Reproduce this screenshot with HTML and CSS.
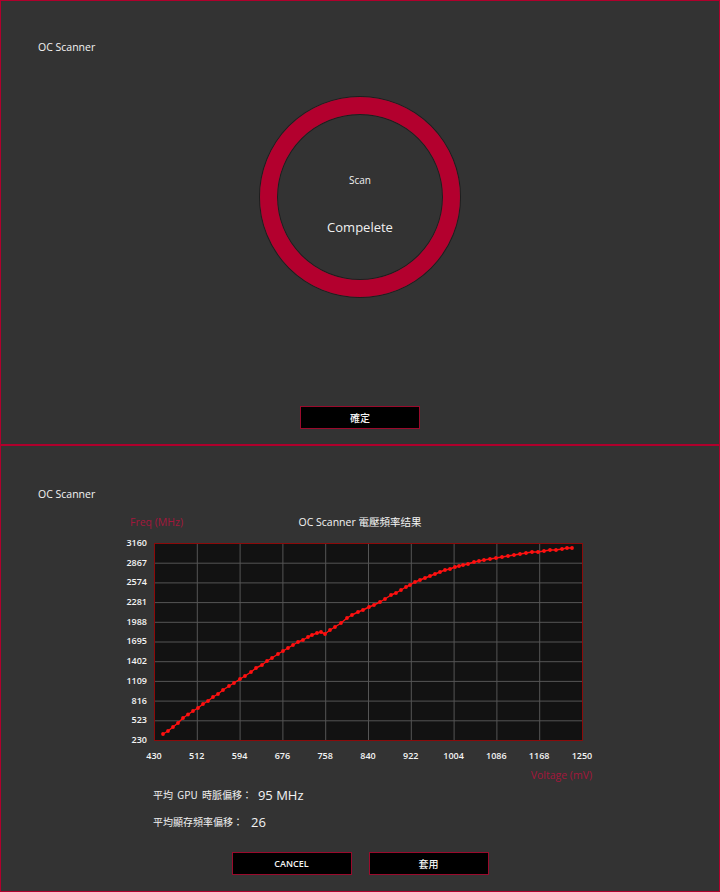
FILE: index.html
```html
<!DOCTYPE html>
<html>
<head>
<meta charset="utf-8">
<link rel="stylesheet" href="styles.css">
</head>
<body>
<section class="panel panel-top">
  <div class="title">OC Scanner</div>
  <div class="ring">
    <div class="ring-label">Scan</div>
    <div class="ring-status">Compelete</div>
  </div>
  <button class="btn btn-ok">確定</button>
</section>
<section class="panel panel-bottom">
  <div class="title">OC Scanner</div>
  <div class="chart-head">
    <span class="axis-name freq">Freq (MHz)</span>
    <span class="chart-title">OC Scanner 電壓頻率结果</span>
    <span></span>
  </div>
  <div class="chart-body">
    <div class="ylabels">
      <span>3160</span><span>2867</span><span>2574</span><span>2281</span><span>1988</span><span>1695</span><span>1402</span><span>1109</span><span>816</span><span>523</span><span>230</span>
    </div>
    <svg class="plot" width="429" height="198" viewBox="0 0 429 198">
      <defs>
        <marker id="dot" viewBox="0 0 5 5" refX="2.5" refY="2.5" markerWidth="5" markerHeight="5" markerUnits="userSpaceOnUse">
          <circle cx="2.5" cy="2.5" r="1.9" fill="#ff1010"/>
        </marker>
      </defs>
      <rect x="0.5" y="0.5" width="428" height="197" fill="#121212"/>
      <path d="M43.3 1V197M86.1 1V197M128.9 1V197M171.7 1V197M214.5 1V197M257.3 1V197M300.1 1V197M342.9 1V197M385.7 1V197M1 20.2H428M1 39.9H428M1 59.6H428M1 79.3H428M1 99H428M1 118.7H428M1 138.4H428M1 158.1H428M1 177.8H428" stroke="#555" stroke-width="1" fill="none"/>
      <rect x="0.5" y="0.5" width="428" height="197" fill="none" stroke="#8c0a0a"/>
      <polyline fill="none" stroke="#ff1010" stroke-width="1.4" stroke-linejoin="round" marker-start="url(#dot)" marker-mid="url(#dot)" marker-end="url(#dot)"
        points="9,191 14,188 19,184 24,180 29,175 34,171.5 39,168 44,165 49,161 54,158 59,154 64,151 69,147 75,143 80,140 86,136 91,133 97,129 102,125 108,122 113,118 118,115 124,111 129,108 134,105 139,102 144,99 149,97 154,94 158,92 163,90 167,89 171,91 176,87 181,84 187,80 193,75 198,72 204,69 209,67 215,64 220,62 226,59 231,56 237,52 242,50 247,47 252,44 256,42 261,39 266,37 271,35 276,33 281,31 286,29 291,27 296,26 301,24 305,23 309,22 314,21 320,19 325,18 330,17 336,16 342,15 348,14 354,13 360,12 366,11 372,10 378,9 384,9 390,8 396,7 402,7 408,6 413,5 418,5"/>
    </svg>
  </div>
  <div class="xlabels">
    <span>430</span><span>512</span><span>594</span><span>676</span><span>758</span><span>840</span><span>922</span><span>1004</span><span>1086</span><span>1168</span><span>1250</span>
  </div>
  <div class="axis-name volt">Voltage (mV)</div>
  <div class="stat stat-gpu">
    <span class="stat-label">平均 GPU 時脈偏移：</span>
    <span class="stat-value">95 MHz</span>
  </div>
  <div class="stat stat-mem">
    <span class="stat-label">平均顯存頻率偏移：</span>
    <span class="stat-value">26</span>
  </div>
  <div class="actions">
    <button class="btn">CANCEL</button>
    <button class="btn btn-cjk">套用</button>
  </div>
</section>
</body>
</html>
```
FILE: styles.css
```css
html, body {
  margin: 0;
  padding: 0;
  background: #333333;
}
body {
  width: 720px;
  height: 892px;
  overflow: hidden;
  font-family: "Open Sans", "Noto Sans CJK TC", sans-serif;
  color: #f0f0f0;
}
.panel {
  box-sizing: border-box;
  width: 720px;
  border: 1px solid #b0002c;
  display: flex;
  flex-direction: column;
}
.panel-top {
  height: 445px;
  padding-top: 39px;
  align-items: center;
}
.panel-bottom {
  height: 447px;
  padding-top: 41px;
}
.title {
  align-self: flex-start;
  padding-left: 37px;
  font-size: 10.5px;
  line-height: 14px;
  color: #f4f4f4;
}
.ring {
  margin-top: 43px;
  width: 166px;
  height: 166px;
  border: 17px solid #b3002e;
  border-radius: 50%;
  box-shadow: 0 0 0 1px #1e1e1e, inset 0 0 0 1px #1e1e1e;
  display: flex;
  flex-direction: column;
  align-items: center;
}
.ring-label {
  margin-top: 59px;
  font-size: 10px;
  line-height: 14px;
}
.ring-status {
  margin-top: 31px;
  font-size: 13px;
  line-height: 18px;
}
.btn {
  box-sizing: border-box;
  width: 120px;
  height: 23px;
  padding: 0;
  background: #000;
  border: 1px solid #9a0a2c;
  color: #f4f4f4;
  font-family: "Open Sans", "Noto Sans CJK TC", sans-serif;
  font-size: 9px;
  font-weight: 600;
}
.btn-ok {
  margin-top: 109px;
  font-size: 10px;
  font-family: "Noto Sans CJK TC", sans-serif;
  font-weight: 500;
}
.btn-cjk {
  font-family: "Noto Sans CJK TC", sans-serif;
  font-size: 10px;
  font-weight: 500;
}
.chart-head {
  margin-top: 14px;
  display: grid;
  grid-template-columns: 1fr auto 1fr;
  font-size: 10.5px;
  line-height: 14px;
}
.axis-name {
  color: #a3173c;
  font-size: 10.5px;
  line-height: 14px;
}
.freq {
  padding-left: 129px;
}
.chart-title {
  color: #f4f4f4;
}
.chart-body {
  margin-top: 4px;
  display: flex;
  padding-left: 118px;
}
.ylabels {
  width: 28px;
  display: flex;
  flex-direction: column;
  align-items: flex-end;
  margin-right: 7px;
}
.ylabels span, .xlabels span {
  font-size: 9px;
  font-weight: 600;
  color: #f4f4f4;
}
.ylabels span {
  height: 19.7px;
  line-height: 19.7px;
}
.plot {
  display: block;
  margin-top: 10px;
}
.xlabels {
  display: flex;
  padding-left: 131.6px;
  line-height: 12px;
}
.xlabels span {
  width: 42.8px;
  text-align: center;
}
.volt {
  margin-top: 6px;
  align-self: flex-end;
  padding-right: 127px;
}
.stat {
  display: flex;
  align-items: center;
  padding-left: 152px;
  height: 18px;
}
.stat-gpu {
  margin-top: 4px;
}
.stat-mem {
  margin-top: 9px;
}
.stat-label {
  font-family: "Noto Sans CJK TC", sans-serif;
  font-size: 10px;
  color: #f0f0f0;
  word-spacing: 2px;
}
.stat-value {
  font-size: 13px;
  color: #f4f4f4;
}
.stat-gpu .stat-value {
  margin-left: 6px;
}
.stat-mem .stat-value {
  margin-left: 8px;
}
.actions {
  margin-top: 21px;
  display: flex;
  justify-content: center;
  gap: 17px;
}
```
